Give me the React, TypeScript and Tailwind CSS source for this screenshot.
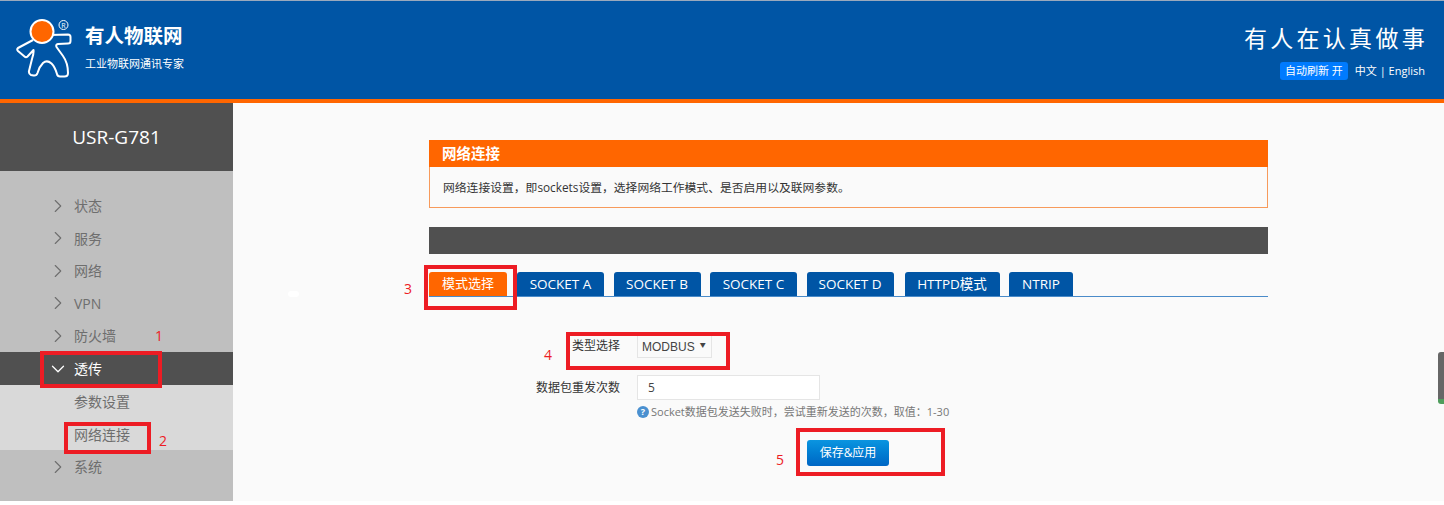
import React from 'react';
import { ChevronRight, ChevronDown } from 'lucide-react';

const menuItems = ['状态', '服务', '网络', 'VPN', '防火墙'];
const socketTabs = [
  { label: 'SOCKET A', width: 'w-[87px]' },
  { label: 'SOCKET B', width: 'w-[87px]' },
  { label: 'SOCKET C', width: 'w-[87px]' },
  { label: 'SOCKET D', width: 'w-[87px] mr-[1.5px]' },
  { label: 'HTTPD模式', width: 'w-[95px]' },
  { label: 'NTRIP', width: 'w-[64px]' },
];

const Logo = () => (
  <svg width="58" height="64" viewBox="16 17 58 64" fill="none" className="shrink-0">
    <path
      d="M50 36 L68 35.5 Q70.5 35.5 70.5 38 L70.5 42 Q70.5 44.5 68 44.5 L58 45 Q55.5 45.5 56.5 48 L63 57 Q68 64 68 74 Q68 77.5 64.5 77.5 L60 77.5 Q57.5 77.5 57 75 Q55 68 51.5 64.5 Q47 60.5 43 64 Q39 68 37.5 74 Q36.5 77 33.5 76.5 L31 76 Q28.5 75 29 72 L32 60 Q34 54 33.5 51 L27.5 57.5 Q26 59 24.5 57.5 L18 52 Q16.5 50.5 18 49 L33 41"
      stroke="#fff"
      strokeWidth="2"
      strokeLinejoin="round"
    />
    <circle cx="42" cy="32.5" r="11.5" fill="#ff6600" stroke="#fff" strokeWidth="2" />
    <circle cx="63.5" cy="26" r="4.5" stroke="#fff" strokeWidth="1" />
    <text x="63.5" y="28.5" fontSize="7" fill="#fff" textAnchor="middle">R</text>
  </svg>
);

const Callout = ({ className }: { className: string }) => (
  <div className={`absolute border-[4px] border-[#ed1c24] ${className}`} />
);

const Num = ({ className, n }: { className: string; n: string }) => (
  <span className={`absolute text-[14px] leading-none text-[#ed1c24] ${className}`}>{n}</span>
);

export default function App() {
  return (
    <div
      className="relative w-[1444px] h-[505px] overflow-hidden bg-white"
      style={{ fontFamily: '"Open Sans", "Noto Sans CJK SC", sans-serif' }}
    >
      {/* Top bar */}
      <header className="h-[103px] bg-[#0055a5] border-t border-t-[#9aa9bd] border-b-4 border-b-[#ff6600] flex items-center justify-between pl-[16px] pr-[19px] pb-[2px]">
        <div className="flex items-center gap-[11px] mt-[-2px]">
          <Logo />
          <div className="text-white">
            <div className="text-[19.5px] leading-[24px] font-bold">有人物联网</div>
            <div className="text-[11px] leading-[16px] mt-[8px]">工业物联网通讯专家</div>
          </div>
        </div>
        <div className="flex flex-col items-end text-white mt-[4px]">
          <div className="text-[23px] leading-[30px] tracking-[3.3px] mr-[-3px]">有人在认真做事</div>
          <div className="flex items-center mt-[9px] text-[11px] leading-[18px]">
            <span className="bg-[#007bff] rounded-[3px] px-[5px] mr-[7px]">自动刷新 开</span>
            <span>中文 | English</span>
          </div>
        </div>
      </header>

      <div className="flex h-[398px]">
        {/* Side menu */}
        <aside className="w-[233px] shrink-0 bg-[#bfbfbf] text-[14px] text-[#6e6e6e]">
          <div className="h-[68px] bg-[#505050] text-white text-[19px] flex items-center justify-center">
            USR-G781
          </div>
          <nav className="pt-[18.5px]">
            {menuItems.map((item) => (
              <div key={item} className="h-[32.5px] flex items-center pl-[47px] gap-[5px]">
                <ChevronRight className="w-[22px] h-[22px]" strokeWidth={1.2} />
                <span>{item}</span>
              </div>
            ))}
            <div className="h-[33px] bg-[#505050] text-white flex items-center pl-[47px] gap-[5px]">
              <ChevronDown className="w-[22px] h-[22px]" strokeWidth={1.4} />
              <span>透传</span>
            </div>
            <div className="bg-[#d9d9d9] h-[65px] pl-[74px] flex flex-col">
              <div className="h-[33px] flex items-center">参数设置</div>
              <div className="h-[32px] flex items-center">网络连接</div>
            </div>
            <div className="h-[33px] flex items-center pl-[47px] gap-[5px]">
              <ChevronRight className="w-[22px] h-[22px]" strokeWidth={1.2} />
              <span>系统</span>
            </div>
          </nav>
        </aside>

        {/* Content */}
        <main className="flex-1 bg-[#fafafa] pl-[196px] pr-[176px] pt-[37px]">
          <section className="bg-[#f79a5b] px-px pb-px">
            <h2 className="h-[27px] bg-[#ff6600] text-white text-[14.5px] font-bold leading-[27px] pl-[13px] mx-[-1px] px-[14px]">网络连接</h2>
            <div className="h-[40px] bg-[#fafafa] text-[11.8px] text-[#333] leading-[40px] pl-[13px]">
              网络连接设置，即sockets设置，选择网络工作模式、是否启用以及联网参数。
            </div>
          </section>

          <div className="h-[27px] bg-[#505050] mt-[19px]" />

          <div className="flex mt-[18px] h-[25px] border-b border-[#4a8bc9]">
            <div className="w-[78px] h-[24px] bg-[#ff6600] text-white text-[13px] rounded-t-[3px] flex items-center justify-center mr-[10px]">
              模式选择
            </div>
            <div className="flex gap-[9.5px]">
              {socketTabs.map((tab) => (
                <div
                  key={tab.label}
                  className={`${tab.width} h-[24px] bg-[#0055a5] text-white text-[13.5px] rounded-t-[3px] flex items-center justify-center pt-[1px]`}
                >
                  {tab.label}
                </div>
              ))}
            </div>
          </div>

          {/* Form */}
          <div className="mt-[36px] text-[12px] text-[#333]">
            <div className="flex items-start h-[42px]">
              <div className="w-[191px] text-right leading-[17px] pt-[4px]">类型选择</div>
              <div className="ml-[17px] w-[75px] h-[25px] border border-[#e5e5e5] border-t-0 flex items-center pl-[4px] pt-[3px] text-[#444] gap-[5px]">
                <span className="text-[12px]" style={{ fontFamily: '"Liberation Sans", sans-serif' }}>MODBUS</span>
                <span className="text-[6px] mb-[3px]">▼</span>
              </div>
            </div>
            <div className="flex items-center h-[25px]">
              <div className="w-[191px] text-right">数据包重发次数</div>
              <div className="ml-[17px] w-[183px] h-[25px] bg-white border border-[#e5e5e5] pl-[10px] leading-[23px] text-[#444]">5</div>
            </div>
            <div className="flex items-center ml-[208px] mt-[3px] h-[18px] text-[11px] text-[#777] gap-[2px]">
              <span className="w-[12px] h-[12px] rounded-full bg-[#4a90d0] text-white text-[9px] font-bold leading-[12px] text-center">?</span>
              <span>Socket数据包发送失败时，尝试重新发送的次数，取值：1-30</span>
            </div>
            <div className="ml-[378px] mt-[19px]">
              <button className="w-[82px] h-[26px] rounded-[3px] bg-gradient-to-b from-[#0b95e0] to-[#0066c4] text-white text-[12px]">
                保存&amp;应用
              </button>
            </div>
          </div>
        </main>
      </div>

      {/* Speck left in the screenshot */}
      <div className="absolute left-[288px] top-[291px] w-[11px] h-[6px] rounded-full bg-white" />

      {/* Scroll tab on the window edge */}
      <div className="absolute left-[1438px] top-[352px] w-[6px] h-[52px] rounded-l-[3px] bg-[#666] border-b-[5px] border-b-[#4f9d5c]" />

      {/* Red annotations */}
      <Callout className="left-[40px] top-[351px] w-[122px] h-[37px]" />
      <Callout className="left-[64px] top-[422px] w-[87px] h-[32px]" />
      <Callout className="left-[424px] top-[265px] w-[93px] h-[45px]" />
      <Callout className="left-[566px] top-[332px] w-[164px] h-[38px]" />
      <Callout className="left-[796px] top-[428px] w-[149px] h-[48px]" />
      <Num n="1" className="left-[155px] top-[329px]" />
      <Num n="2" className="left-[159px] top-[434px]" />
      <Num n="3" className="left-[404px] top-[282px]" />
      <Num n="4" className="left-[544px] top-[348px]" />
      <Num n="5" className="left-[776px] top-[453px]" />
    </div>
  );
}
